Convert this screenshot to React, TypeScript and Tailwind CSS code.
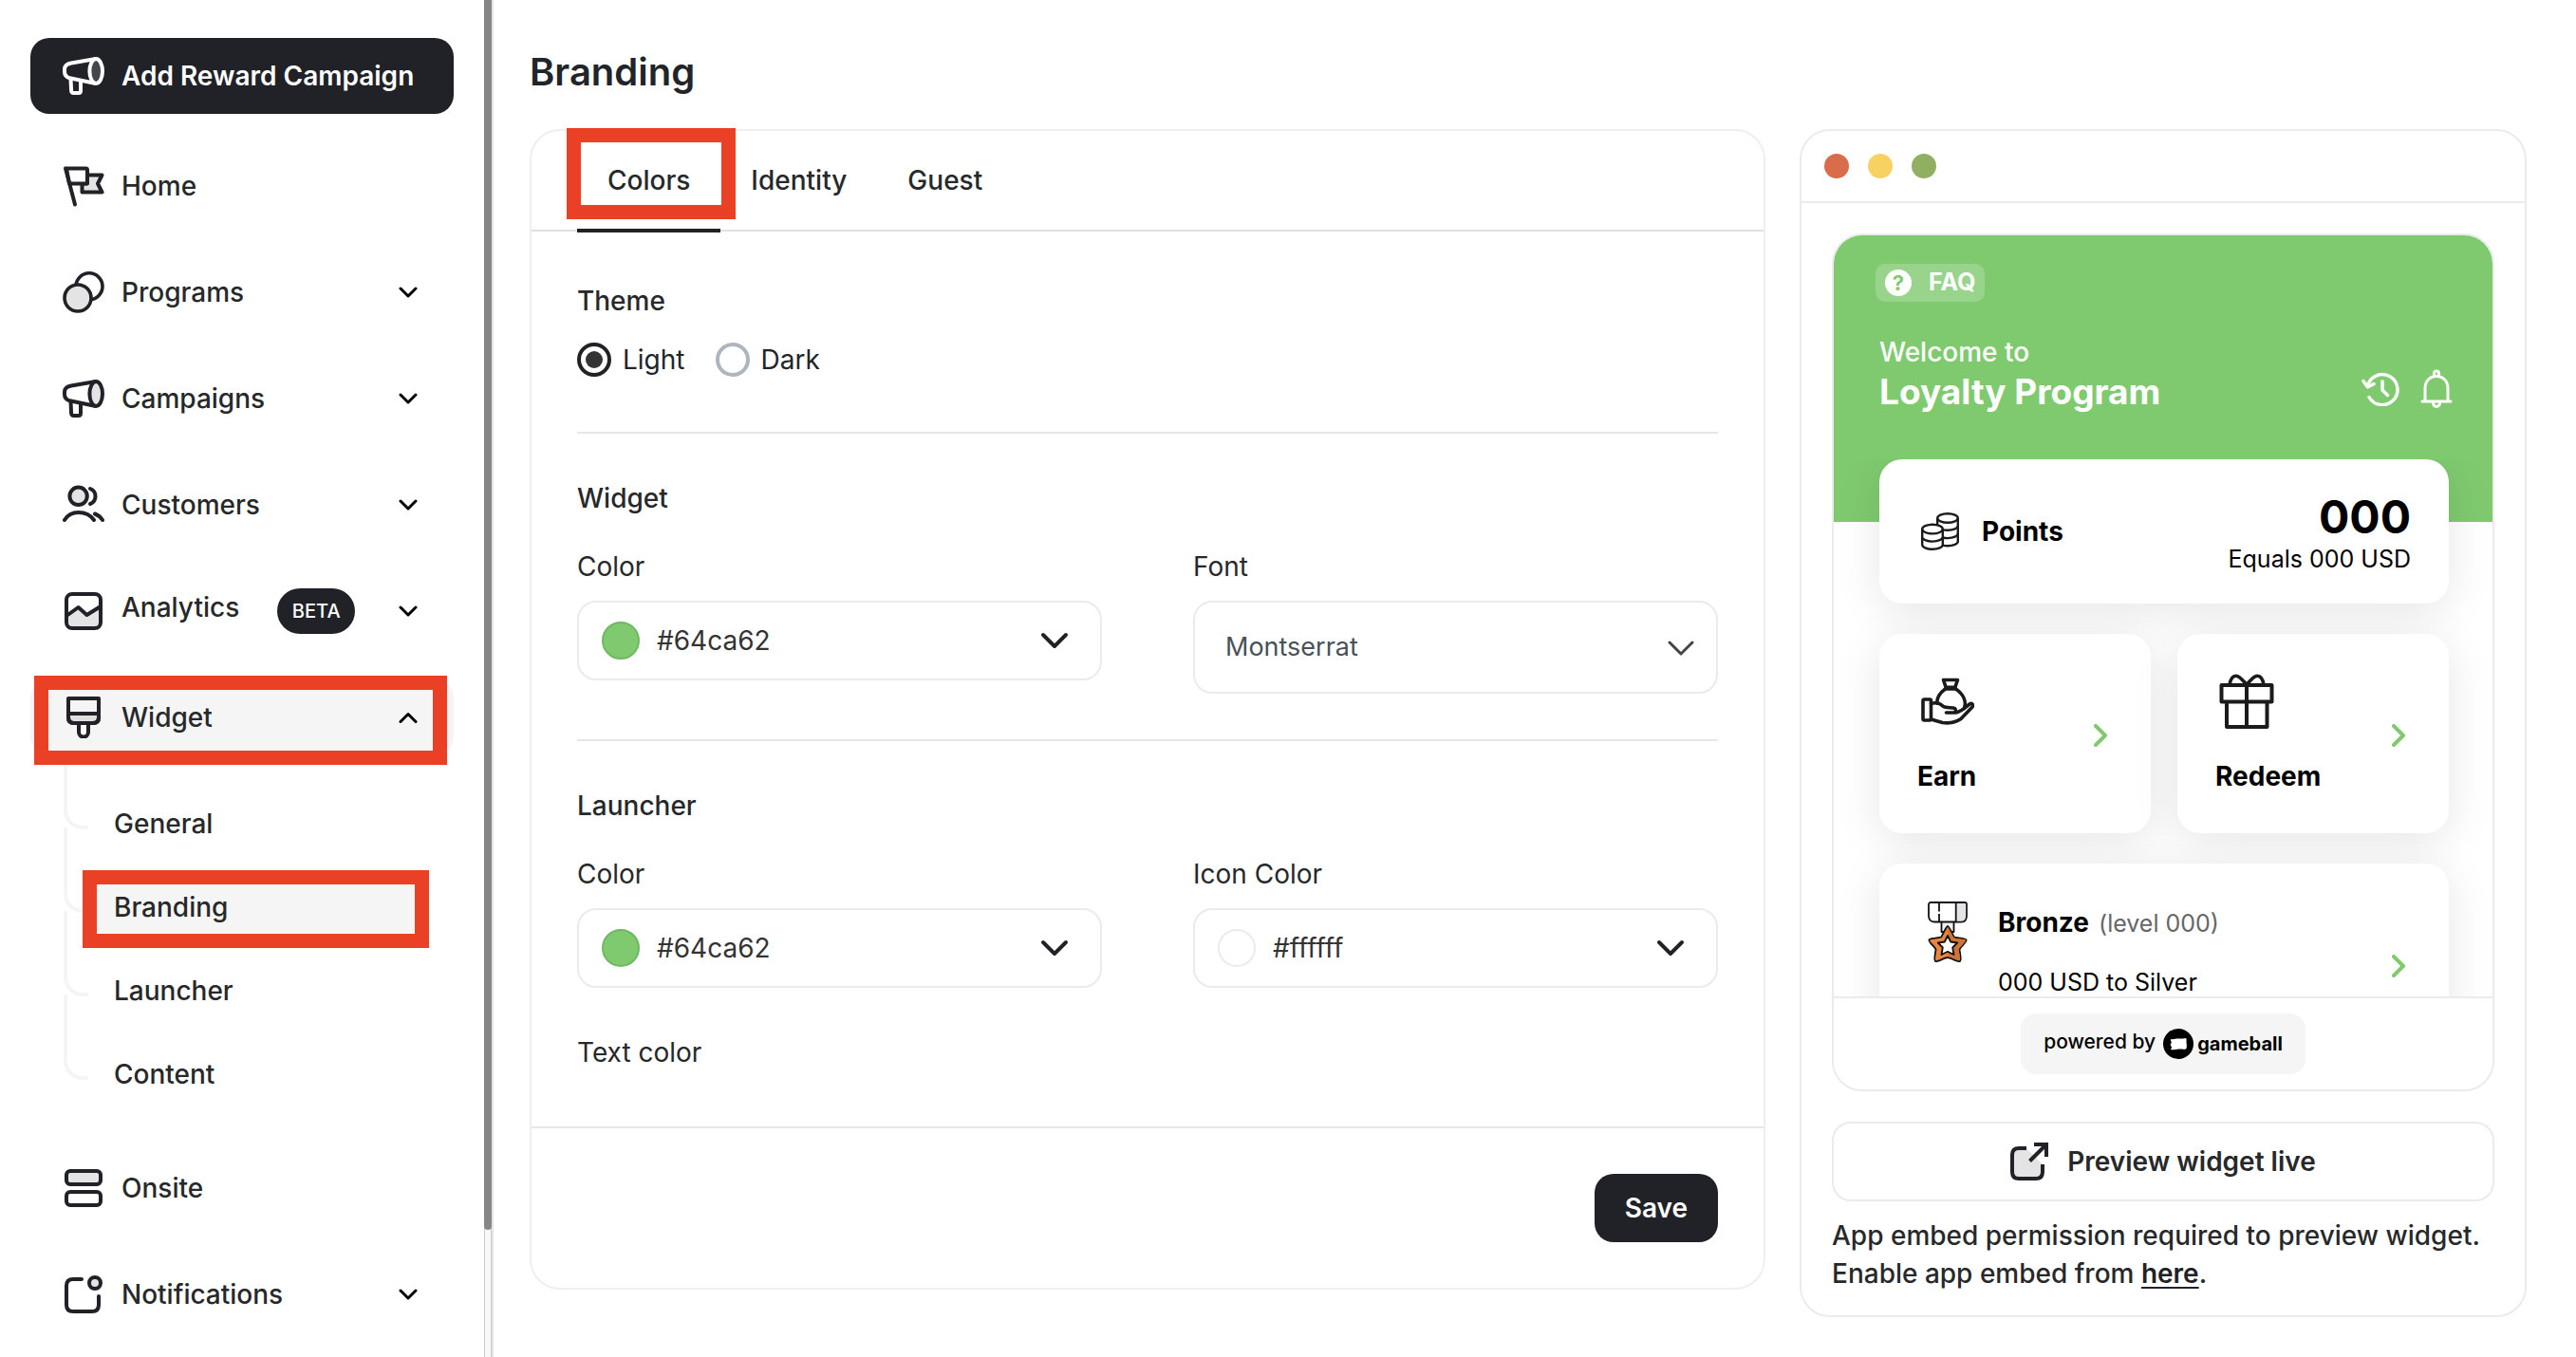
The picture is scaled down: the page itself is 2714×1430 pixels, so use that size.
import React, { memo, useState } from "react";
import clsx from "clsx";

interface IconProps {
  className?: string;
}

const DARK = "#212228";
const SHADE = "#e4e4e4";

const MegaphoneIcon = ({ className, light }: IconProps & { light?: boolean }) => (
  <svg viewBox="0 0 44 44" fill="none" stroke="currentColor" strokeWidth="4" strokeLinejoin="round" className={className}>
    <path d="M35 4 9 8.5C4.500 9.300 2 11.500 2 15v2.500c0 3.500 2 5.800 5.500 6.800L35 30" />
    <ellipse cx="35.200" cy="17" rx="6.800" ry="13" fill={light ? "#45464b" : SHADE} />
    <path d="M8.500 25l.6 12.500c.1 1.600 1 2.500 2.500 2.500h5c1.500 0 2.400-.9 2.400-2.500V27.500" />
  </svg>
);

const FlagIcon = ({ className }: IconProps) => (
  <svg viewBox="0 0 44 44" fill="none" stroke={DARK} strokeWidth="4" strokeLinecap="round" strokeLinejoin="round" className={className}>
    <path d="M26 10.500h15.500l-4.500 9 4.500 9H20.500V19.500H26z" fill={SHADE} />
    <path d="M4 3.500h20.500c.9 0 1.500.6 1.500 1.500v13c0 .9-.6 1.500-1.500 1.500H7z" fill="#fff" />
    <path d="M3 3.500 13 41.500" />
  </svg>
);

const CirclesIcon = ({ className }: IconProps) => (
  <svg viewBox="0 0 44 44" fill="none" stroke={DARK} strokeWidth="3.600" className={className}>
    <circle cx="28" cy="15.800" r="14" />
    <circle cx="16" cy="28" r="14" fill={SHADE} />
  </svg>
);

const UsersIcon = ({ className }: IconProps) => (
  <svg viewBox="0 0 44 44" fill="none" stroke={DARK} strokeWidth="4" strokeLinecap="round" className={className}>
    <circle cx="16.600" cy="12.800" r="9.200" fill={SHADE} />
    <path d="M29 5c3.300 1.300 5.500 4.300 5.500 8s-2.200 6.800-5.500 8" />
    <path d="M2 38c3-5 8.500-8 14.700-8S29.500 33 33 38" />
    <path d="M34 31.500c3.300 1.200 6 3.500 8 6.500" />
  </svg>
);

const ChartIcon = ({ className }: IconProps) => (
  <svg viewBox="0 0 44 44" fill="none" stroke={DARK} strokeWidth="4" strokeLinejoin="round" className={className}>
    <path d="M4 27 16.500 18.500 25.500 26 40 17v18c0 3-2 5-5 5H9c-3 0-5-2-5-5z" fill={SHADE} stroke="none" />
    <rect x="4" y="4" width="36" height="36" rx="6" />
    <path d="M4 27 16.500 18 25.500 26 40 17" />
  </svg>
);

const BrushIcon = ({ className }: IconProps) => (
  <svg viewBox="0 0 44 44" fill="none" stroke={DARK} strokeWidth="4" strokeLinejoin="round" className={className}>
    <path d="M17 28h10v9.500a5 5 0 0 1-10 0z" fill="#fff" />
    <path d="M6 18h32v4c0 4-2 6-6 6H12c-4 0-6-2-6-6z" fill="#dedede" />
    <path d="M6 2h32v20c0 4-2 6-6 6H12c-4 0-6-2-6-6z" />
  </svg>
);

const RowsIcon = ({ className }: IconProps) => (
  <svg viewBox="0 0 44 44" fill="none" stroke={DARK} strokeWidth="4" className={className}>
    <rect x="4" y="4" width="36" height="14" rx="4" fill={SHADE} />
    <rect x="4" y="26" width="36" height="14" rx="4" />
  </svg>
);

const NotificationIcon = ({ className }: IconProps) => (
  <svg viewBox="0 0 44 44" fill="none" stroke={DARK} strokeWidth="4" strokeLinecap="round" className={className}>
    <path d="M20 6h-9c-4.500 0-7 2.500-7 7v20c0 4.500 2.500 7 7 7h20c4.500 0 7-2.500 7-7v-9" />
    <circle cx="34" cy="10" r="6" fill={SHADE} />
  </svg>
);

const ExternalIcon = ({ className }: IconProps) => (
  <svg viewBox="0 0 40 40" fill="none" stroke={DARK} strokeWidth="4" className={className}>
    <path d="M17 6H9c-4.500 0-7 2.500-7 7v18c0 4.500 2.500 7 7 7h18c4.500 0 7-2.500 7-7v-8L17 6z" fill={SHADE} stroke="none" />
    <path d="M17 6H9c-4.500 0-7 2.500-7 7v18c0 4.500 2.500 7 7 7h18c4.500 0 7-2.500 7-7v-8" strokeLinejoin="round" />
    <path d="M20.500 19.500 38 2M25 2h13v13" />
  </svg>
);

const HistoryIcon = ({ className }: IconProps) => (
  <svg viewBox="0 0 40 36" fill="none" stroke="#fff" strokeWidth="3.500" strokeLinecap="round" strokeLinejoin="round" className={className}>
    <path d="M6.500 14.500A16 16 0 1 1 8 26.500" />
    <path d="M2 9.500l4.500 6.500 6.500-3.500" />
    <path d="M22 10v9l5.500 5.500" />
  </svg>
);

const BellIcon = ({ className }: IconProps) => (
  <svg viewBox="0 0 34 42" fill="none" stroke="#fff" strokeWidth="3" strokeLinecap="round" strokeLinejoin="round" className={className}>
    <path d="M5 33V20C5 12.500 10 7.500 17 7.500S29 12.500 29 20v13" />
    <path d="M2 34h30" />
    <path d="M14.500 7V4.500a2.500 2.500 0 0 1 5 0V7" />
    <path d="M13.500 35.500a3.500 4 0 0 0 7 0" />
  </svg>
);

const CoinsIcon = ({ className }: IconProps) => (
  <svg viewBox="0 0 40 40" fill="none" stroke="#1b1b1b" strokeWidth="2.400" className={className}>
    <ellipse cx="28" cy="6" rx="10.800" ry="4.800" />
    <path d="M17.200 6v8M38.800 6v24.500c0 2.700-4.800 4.800-10.800 4.800-1.800 0-3.500-.2-5-.6" />
    <path d="M38.800 14c0 2.700-4.800 4.800-10.800 4.800-2 0-3.800-.2-5.400-.7M38.800 22.300c0 2.700-4.800 4.800-10.800 4.800-1.800 0-3.500-.2-5-.6" />
    <ellipse cx="12" cy="17.600" rx="10.800" ry="4.800" />
    <path d="M1.200 17.600V34c0 2.700 4.800 4.800 10.800 4.800s10.800-2.100 10.800-4.800V17.600M1.200 25.800c0 2.700 4.800 4.800 10.800 4.800s10.800-2.100 10.800-4.800" />
  </svg>
);

const EarnIcon = ({ className }: IconProps) => (
  <svg viewBox="0 0 56 50" fill="none" stroke="#1b1b1b" strokeWidth="3.600" strokeLinecap="round" strokeLinejoin="round" className={className}>
    <path d="M23.500 2.500h15l-2.700 7.800H26.200zM25.500 12h11" />
    <path d="M25.500 12c-5.500 4-9 9-8.800 15M36.500 12c8 5.500 11.500 13 9 20.500" />
    <rect x="2" y="23" width="8.500" height="22" rx="1.500" />
    <path d="M10.500 27.500c5-1.500 10 0 13 3 3 2 10 .5 12 2 1.300 1 1 3.500 0 4.500H26.500M36.500 37c5.500-1 9-4.500 14.500-9 2.500-1.500 4.500.5 3 3L42 43.500c-6 4-13 5-19.500 4L10.500 44" />
  </svg>
);

const GiftIcon = ({ className }: IconProps) => (
  <svg viewBox="0 0 58 58" fill="none" stroke="#1b1b1b" strokeWidth="4" strokeLinejoin="round" className={className}>
    <path d="M2.500 12h53v17.500h-53zM8 29.500h42.500v26.500H8zM29 12v44" />
    <path d="M11 11.500C12 5.500 14.500 2 18 2.200c4 .3 6.500 4.500 11 9.300 4.500-4.800 7-9 11-9.300 3.500-.2 6 3.300 7 9.300" strokeWidth="3.600" />
  </svg>
);

const MedalIcon = ({ className }: IconProps) => (
  <svg viewBox="0 0 42 64" fill="#fff" stroke="#111" strokeWidth="1.800" strokeLinejoin="round" className={className}>
    <path d="M14.500 20h13v12h-13z" fill="#f1f1f1" />
    <path d="M3 1h36c1 0 2 .8 2 2v12c0 4-2 6.500-6 6.500H7c-4 0-6-2.500-6-6.500V3c0-1.200 1-2 2-2z" />
    <path d="M30 1.900h9c.7 0 1.100.4 1.100 1.100v12c0 3.500-1.600 5.600-5.100 5.600h-5z" fill="#e3e3e8" stroke="none" />
    <path d="M12 1v9.500M12 13v8.500M29.700 1v20.500" />
    <path d="M21 26c1.500 0 5.500 10 7 11.500 2 1 12 .8 12.700 3 .7 2-6.700 8-7.200 10 0 2 2.500 11 .5 12.500-2 1-10-4-13-4s-11 5-13 4c-2-1.500.5-10.500.5-12.500-.5-2-7.900-8-7.200-10 .7-2.200 10.700-2 12.700-3 1.500-1.500 5.500-11.500 7-11.500z" fill="#ea8540" />
    <path d="M21 26.900c1.200 0 5 9.800 7 11.500 2 1 11 .8 11.900 2.100.6 2-6.700 8-7.200 10 0 2 2.500 10.500.8 11.700C31 62.500 24 58.100 21 58.100z" fill="#cf7336" stroke="none" />
    <path d="M21 36l3.200 6.500 7 1-5 5 1.300 7.500L21 52.800 14.500 56l1.300-7.500-5-5 7-1z" />
  </svg>
);

interface ChevronProps extends IconProps {
  d: string;
  viewBox: string;
  strokeWidth?: number;
}

const Chevron = ({ d, viewBox, strokeWidth = 3, className }: ChevronProps) => (
  <svg viewBox={viewBox} fill="none" stroke="currentColor" strokeWidth={strokeWidth} strokeLinecap="round" strokeLinejoin="round" className={className} aria-hidden="true">
    <path d={d} />
  </svg>
);

interface NavItem {
  label: string;
  icon: (props: IconProps) => React.JSX.Element;
  expandable?: boolean;
  beta?: boolean;
}

const TOP_ITEMS: NavItem[] = [
  { label: "Home", icon: FlagIcon },
  { label: "Programs", icon: CirclesIcon, expandable: true },
  { label: "Campaigns", icon: MegaphoneIcon, expandable: true },
  { label: "Customers", icon: UsersIcon, expandable: true },
  { label: "Analytics", icon: ChartIcon, expandable: true, beta: true },
];

const BOTTOM_ITEMS: NavItem[] = [
  { label: "Onsite", icon: RowsIcon },
  { label: "Notifications", icon: NotificationIcon, expandable: true },
];

const WIDGET_PAGES = ["General", "Branding", "Launcher", "Content"];
const TABS = ["Colors", "Identity", "Guest"];

const Highlight = ({ className }: IconProps) => (
  <span aria-hidden="true" className={clsx("pointer-events-none absolute border-15 border-[#ea4026]", className)} />
);

const NavButton = ({ item, open }: { item: NavItem; open?: boolean }) => {
  const Icon = item.icon;
  return (
    <button
      type="button"
      className={clsx(
        "relative flex h-20 w-full items-center rounded-[20px] pr-[38px] pl-[34px] text-left text-[28px] font-medium text-[#27282a]",
        open && "bg-[#f5f5f5]"
      )}
    >
      <Icon className="mr-[18px] size-11 shrink-0 text-[#212228]" />
      <span className={clsx(item.beta && "pb-2")}>{item.label}</span>
      {item.beta && (
        <span className="ml-10 flex h-12 w-[82px] items-center justify-center rounded-full bg-[#212228] text-[20px] text-white">BETA</span>
      )}
      {(item.expandable || open) && (
        <Chevron
          viewBox="0 0 20 12"
          d={open ? "M2 10.500 10 2.500l8 8" : "M2 2l8 8 8-8"}
          className="ml-auto h-3 w-5 text-black"
        />
      )}
      {open && <Highlight className="-top-1 left-1 h-[94px] w-[435px]" />}
    </button>
  );
};

const Sidebar = memo(() => (
  <aside className="flex w-[520px] shrink-0 border-r-2 border-[#e5e5e5]">
    <nav className="flex flex-1 flex-col px-8 pt-10">
      <button type="button" className="mb-9 flex h-20 items-center rounded-[20px] bg-[#212228] pl-[34px] text-[28px] font-semibold text-white">
        <MegaphoneIcon light className="mr-[18px] size-11" />
        Add Reward Campaign
      </button>
      <div className="flex flex-col gap-8">
        {TOP_ITEMS.map((item) => (
          <NavButton key={item.label} item={item} />
        ))}
        <NavButton item={{ label: "Widget", icon: BrushIcon }} open />
      </div>
      <ul className="mt-7 mb-9 pl-[35px]">
        {WIDGET_PAGES.map((page, index) => (
          <li key={page} className="relative flex h-[88px] items-center pl-[26px]">
            <span
              aria-hidden="true"
              className={clsx(
                "absolute bottom-[38px] left-0 w-[26px] rounded-bl-[20px] border-b-4 border-l-4 border-[#f5f5f5]",
                index === 0 ? "h-[68px]" : "h-[90px]"
              )}
            />
            <a
              href={`#${page.toLowerCase()}`}
              className={clsx(
                "flex h-[72px] w-[350px] items-center rounded-2xl pl-[27px] text-[28px] font-medium text-[#27282a]",
                page === "Branding" && "bg-[#f5f5f5]"
              )}
            >
              {page}
            </a>
            {page === "Branding" && <Highlight className="top-[5px] left-5 h-[82px] w-[365px]" />}
          </li>
        ))}
      </ul>
      <div className="flex flex-col gap-8">
        {BOTTOM_ITEMS.map((item) => (
          <NavButton key={item.label} item={item} />
        ))}
      </div>
    </nav>
    <div aria-hidden="true" className="w-2 border-x border-[#cbcbcb] bg-[#f8f8f8]">
      <div className="-mx-px h-[1296px] rounded-b-full bg-[#868686]" />
    </div>
  </aside>
));

const ColorField = ({ id, label, value, swatch }: { id: string; label: string; value: string; swatch: string }) => (
  <div>
    <label htmlFor={id} className="block text-[28px] leading-10 text-[#27282a]">
      {label}
    </label>
    <button id={id} type="button" className="mt-4 flex h-[84px] w-full items-center rounded-[20px] border-2 border-[#ebebeb] pr-[33px] pl-6 text-[28px] text-[#333]">
      <span className={clsx("mr-[18px] size-10 rounded-full border-2", swatch)} />
      {value}
      <Chevron viewBox="0 0 30 18" d="M3 3l12 12L27 3" strokeWidth={4} className="ml-auto h-[18px] w-[30px] text-[#212228]" />
    </button>
  </div>
);

const FontField = () => (
  <div>
    <label htmlFor="widget-font" className="block text-[28px] leading-10 text-[#27282a]">
      Font
    </label>
    <div className="relative mt-4">
      <select id="widget-font" className="h-[98px] w-full appearance-none rounded-[20px] border-2 border-[#ebebeb] bg-white px-8 text-[27px] text-[#495057]">
        <option>Montserrat</option>
      </select>
      <Chevron viewBox="0 0 28 16" d="M2 2l12 12L26 2" className="pointer-events-none absolute top-[42px] right-[25px] h-4 w-7 text-[#444]" />
    </div>
  </div>
);

const SettingsCard = () => {
  const [activeTab, setActiveTab] = useState("Colors");
  const [theme, setTheme] = useState("Light");

  return (
    <section className="flex-1 rounded-[32px] border-2 border-[#efefef]">
      <div role="tablist" className="flex border-b-2 border-[#e0e0e0] px-12 text-[28px] font-medium text-[#27282a]">
        {TABS.map((tab) => (
          <button
            key={tab}
            type="button"
            role="tab"
            aria-selected={activeTab === tab}
            onClick={() => setActiveTab(tab)}
            className={clsx(
              "relative -mb-[3px] h-[107px] border-b-4 px-8",
              activeTab === tab ? "border-[#212228]" : "border-transparent"
            )}
          >
            {tab}
            {tab === "Colors" && <Highlight className="-top-[3px] -left-[11px] h-24 w-[178px]" />}
          </button>
        ))}
      </div>

      <div className="px-12 pt-[53px] pb-[58px]">
        <fieldset>
          <legend className="text-[28px] leading-10 font-medium text-[#27282a]">Theme</legend>
          <div className="mt-[22px] flex h-10 items-center gap-8">
            {["Light", "Dark"].map((option) => (
              <label key={option} className="flex items-center gap-3 text-[28px] text-[#212529]">
                <input
                  type="radio"
                  name="theme"
                  value={option}
                  checked={theme === option}
                  onChange={() => setTheme(option)}
                  className="size-9 appearance-none rounded-full border-4 border-[#adb5bd] bg-clip-content p-[5px] checked:border-[#212228] checked:bg-[#333]"
                />
                {option}
              </label>
            ))}
          </div>
        </fieldset>

        <hr className="mt-14 mb-12 border-t-2 border-[#e6e6e6]" />
        <h2 className="text-[28px] leading-10 font-medium text-[#27282a]">Widget</h2>
        <div className="mt-8 grid grid-cols-2 items-start gap-x-24">
          <ColorField id="widget-color" label="Color" value="#64ca62" swatch="border-[#70b863] bg-[#7fca6f]" />
          <FontField />
        </div>

        <hr className="my-12 border-t-2 border-[#e6e6e6]" />
        <h2 className="text-[28px] leading-10 font-medium text-[#27282a]">Launcher</h2>
        <div className="mt-8 grid grid-cols-2 items-start gap-x-24">
          <ColorField id="launcher-color" label="Color" value="#64ca62" swatch="border-[#70b863] bg-[#7fca6f]" />
          <ColorField id="launcher-icon-color" label="Icon Color" value="#ffffff" swatch="border-[#ebebeb] bg-white" />
        </div>
        <p className="mt-12 text-[28px] leading-10 text-[#27282a]">Text color</p>
      </div>

      <div className="flex justify-end border-t-2 border-[#e6e6e6] px-12 py-12">
        <button type="button" className="h-[72px] rounded-[20px] bg-[#212228] px-8 text-[28px] font-semibold text-white">
          Save
        </button>
      </div>
    </section>
  );
};

const CARD = "rounded-3xl bg-white shadow-[0_8px_48px_rgba(0,0,0,0.1)]";

const ActionCard = ({ label, children }: { label: string; children: React.ReactNode }) => (
  <button type="button" className={clsx(CARD, "flex h-[210px] items-center justify-between pr-[46px] pl-10 text-left")}>
    <span className="flex h-full flex-col justify-between pt-[42px] pb-10">
      {children}
      <span className="text-[28px] leading-10 font-bold text-black">{label}</span>
    </span>
    <Chevron viewBox="0 0 14 24" d="M2 2l10 10L2 22" strokeWidth={4} className="mt-1 h-6 w-3.5 text-[#7fca6f]" />
  </button>
);

const WidgetPreview = () => (
  <div className="overflow-hidden rounded-[32px] border-2 border-[#ebebeb]">
    <div className="h-[802px] overflow-hidden">
      <div className="h-[302px] bg-[#7fca6f] pt-[30px] pr-[42px] pl-12 text-white">
        <button type="button" className="-ml-1 flex h-10 items-center rounded-[10px] bg-white/20 px-2.5 text-[25px] font-bold">
          <span className="mr-[18px] flex size-7 items-center justify-center rounded-full bg-white text-[22px] text-[#7fca6f]">?</span>
          FAQ
        </button>
        <div className="mt-[37px] flex items-end justify-between">
          <div>
            <p className="text-[28px] leading-8 font-medium">Welcome to</p>
            <p className="mt-0.5 text-[37px] leading-12 font-bold">Loyalty Program</p>
          </div>
          <div className="mb-1.5 flex items-center gap-[22px]">
            <button type="button" aria-label="History">
              <HistoryIcon className="h-9 w-10" />
            </button>
            <button type="button" aria-label="Notifications">
              <BellIcon className="h-[42px] w-[34px]" />
            </button>
          </div>
        </div>
      </div>

      <div className="-mt-[66px] flex flex-col gap-8 overflow-hidden pr-[46px] pl-12">
        <div className={clsx(CARD, "flex h-[152px] items-center pr-10 pl-11")}>
          <CoinsIcon className="mr-6 size-10" />
          <span className="text-[28px] font-bold text-black">Points</span>
          <div className="ml-auto pt-2.5 text-right text-black">
            <p className="text-[48px] leading-12 font-bold">000</p>
            <p className="text-[25px] leading-10">Equals 000 USD</p>
          </div>
        </div>
        <div className="grid grid-cols-2 gap-7">
          <ActionCard label="Earn">
            <EarnIcon className="mt-1 ml-1 h-[50px] w-14" />
          </ActionCard>
          <ActionCard label="Redeem">
            <GiftIcon className="ml-1 size-[58px]" />
          </ActionCard>
        </div>
        <div className={clsx(CARD, "flex h-[216px] items-center pr-[46px] pl-[51px]")}>
          <MedalIcon className="mt-10 mr-8 h-16 w-[42px] self-start" />
          <div className="self-start pt-[42px]">
            <p className="flex items-baseline gap-2.5 text-[28px] leading-10 font-bold text-black">
              Bronze <span className="text-[25px] font-normal text-[#666]">(level 000)</span>
            </p>
            <p className="mt-[30px] text-[25px] leading-6 text-black">000 USD to Silver</p>
          </div>
          <Chevron viewBox="0 0 14 24" d="M2 2l10 10L2 22" strokeWidth={4} className="ml-auto h-6 w-3.5 text-[#7fca6f]" />
        </div>
      </div>
    </div>

    <div className="relative flex justify-center border-t-2 border-[#ebebeb] bg-white py-4">
      <a href="#gameball" className="flex h-16 items-center rounded-2xl bg-[#f5f5f5] px-6 text-[21px] text-black">
        <span className="pb-1 font-medium">powered by</span>
        <svg viewBox="0 0 32 32" className="mr-1 ml-2 size-8" aria-hidden="true">
          <circle cx="16" cy="16" r="16" />
          <path d="M8 11c3 .8 5-.6 8-.4 3-.5 5.500.2 8.300-.6.600 2 .1 3.500.3 5 .2 1.500.5 3 .1 4.500-.2 1 0 1.700-.8 2-2.700.6-5.200-.2-7.900.1-3 .4-5.500 1-8 .3.600-1.300 1.200-2 .8-3-.3-1-1.500-1.200-1-2.200s1-1.500.9-2.600c-.2-1-1-1.500-.7-3.100z" fill="#fff" />
        </svg>
        <span className="text-[20px] font-bold">gameball</span>
      </a>
    </div>
  </div>
);

const PreviewCard = () => (
  <section className="w-[766px] shrink-0 rounded-[32px] border-2 border-[#ebebeb]">
    <div className="flex h-19 items-center gap-5 border-b-2 border-[#ebebeb] px-6">
      <span className="size-[26px] rounded-full bg-[#d96c4a]" />
      <span className="size-[26px] rounded-full bg-[#f8d163]" />
      <span className="size-[26px] rounded-full bg-[#91af60]" />
    </div>
    <div className="px-8 pt-8 pb-6">
      <WidgetPreview />
      <button type="button" className="mt-8 flex h-[84px] w-full items-center justify-center gap-5 rounded-[20px] border-2 border-[#ebebeb] text-[28px] font-semibold text-[#27282a]">
        <ExternalIcon className="size-10" />
        Preview widget live
      </button>
      <p className="mt-4 text-[28px] leading-10 font-medium whitespace-nowrap text-[#27282a]">
        App embed permission required to preview widget.
        <br />
        Enable app embed from{" "}
        <a href="#embed" className="font-semibold text-[#212228] underline decoration-2 underline-offset-4">
          here
        </a>
        .
      </p>
    </div>
  </section>
);

const App: React.FC = () => (
  <div className="flex h-screen overflow-hidden bg-white font-['Inter',sans-serif]">
    <Sidebar />
    <main className="flex-1 pt-[52px] pr-[52px] pl-[38px]">
      <h1 className="mb-9 text-[40px] leading-12 font-semibold text-[#212529]">Branding</h1>
      <div className="flex items-start gap-9">
        <SettingsCard />
        <PreviewCard />
      </div>
    </main>
  </div>
);

export default App;
